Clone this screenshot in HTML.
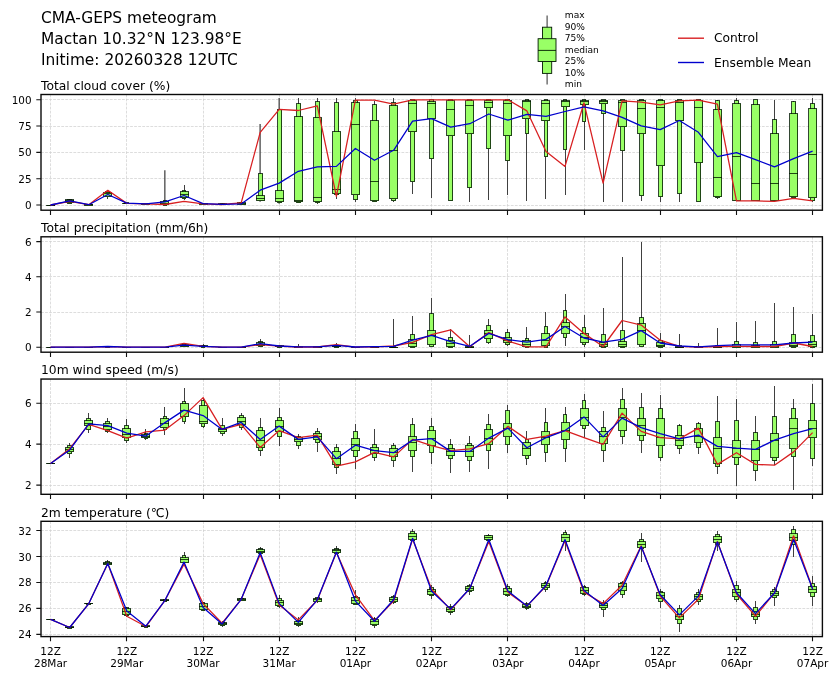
<!DOCTYPE html>
<html lang="en"><head><meta charset="utf-8"><title>CMA-GEPS meteogram</title>
<style>html,body{margin:0;padding:0;background:#fff}svg{display:block;will-change:transform}</style></head>
<body>
<svg width="840" height="680" viewBox="0 0 840 680" font-family="'DejaVu Sans','Liberation Sans',sans-serif" fill="#000">
<rect width="840" height="680" fill="#fff"/>
<g font-size="15.4px"><text x="41" y="22.9">CMA-GEPS meteogram</text><text x="41" y="44.1">Mactan 10.32°N 123.98°E</text><text x="41" y="65.2">Initime: 20260328 12UTC</text></g>
<line x1="547.1" y1="15.6" x2="547.1" y2="84.6" stroke="#404040" stroke-width="1.1"/>
<rect x="542.5" y="27.2" width="9.2" height="46.2" fill="#99ff66" stroke="#001800" stroke-width="0.9"/>
<rect x="538.1" y="38.7" width="17.9" height="22.8" fill="#99ff66" stroke="#001800" stroke-width="0.9"/>
<line x1="538.1" y1="50.4" x2="556" y2="50.4" stroke="#001800" stroke-width="0.9"/>
<g font-size="9.1px">
<text x="564.8" y="18.1">max</text>
<text x="564.8" y="29.6">90%</text>
<text x="564.8" y="41.1">75%</text>
<text x="564.8" y="52.6">median</text>
<text x="564.8" y="64.1">25%</text>
<text x="564.8" y="75.6">10%</text>
<text x="564.8" y="87.1">min</text>
</g>
<line x1="678" y1="38.2" x2="704" y2="38.2" stroke="#d82022" stroke-width="1.39"/>
<line x1="678" y1="62.5" x2="704" y2="62.5" stroke="#0000cd" stroke-width="1.39"/>
<g font-size="12.25px"><text x="714" y="42.4">Control</text><text x="714" y="66.8">Ensemble Mean</text></g>
<g id="panel0">
<text x="41" y="89.7" font-size="12.3px">Total cloud cover (%)</text>
<path d="M50.5 94.5V210.2M126.5 94.5V210.2M203.5 94.5V210.2M279.5 94.5V210.2M355.5 94.5V210.2M431.5 94.5V210.2M507.5 94.5V210.2M584.5 94.5V210.2M660.5 94.5V210.2M736.5 94.5V210.2M812.5 94.5V210.2M41.0 205.5H822.4M41.0 178.5H822.4M41.0 152.5H822.4M41.0 126.5H822.4M41.0 99.5H822.4" stroke="#cecece" stroke-width="0.7" stroke-dasharray="2.8 1.25" fill="none"/>
<clipPath id="cp0"><rect x="41.0" y="94.5" width="781.4" height="115.69999999999999"/></clipPath>
<g clip-path="url(#cp0)">
<path d="M50.5 205.0V205.0M69.5 198.7V203.9M88.5 204.5V205.0M107.5 190.3V198.7M126.5 202.9V203.9M145.5 203.4V204.5M184.5 185.0V199.7M203.5 202.9V204.5M222.5 203.4V205.0M241.5 202.4V205.0M298.5 97.9V203.4M317.5 97.9V204.4M336.5 97.9V198.7M355.5 97.9V202.0M374.5 101.2V202.0M393.5 97.9V202.4M412.5 99.8V194.2M431.5 99.8V198.3M450.5 99.8V201.3M469.5 99.8V202.4M488.5 99.8V199.7M507.5 99.8V195.2M526.5 99.8V200.9M545.5 99.8V198.9M565.5 99.8V194.8M584.5 99.8V149.9M603.5 99.8V201.7M622.5 99.8V201.7M641.5 99.8V200.9M660.5 99.8V201.7M679.5 99.8V201.7M698.5 99.8V201.7M717.5 99.8V199.3M736.5 97.9V201.3M755.5 99.8V201.3M774.5 99.8V201.3M793.5 100.8V199.3M812.5 97.9V201.7" stroke="#404040" stroke-width="1" fill="none" shape-rendering="crispEdges"/>
<path d="M164.85 170.3V205.0M260.10 124.1V201.7M279.15 97.9V203.8" stroke="#404040" stroke-width="1.25" fill="none"/>
<path d="M48.5 205.5H52.5V205.5H48.5zM67.5 199.5H71.5V203.5H67.5zM86.5 204.5H90.5V205.5H86.5zM105.5 191.5H109.5V196.5H105.5zM124.5 202.5H128.5V203.5H124.5zM144.5 203.5H147.5V204.5H144.5zM163.5 200.5H166.5V205.5H163.5zM182.5 190.5H185.5V198.5H182.5zM201.5 203.5H204.5V204.5H201.5zM220.5 203.5H224.5V204.5H220.5zM239.5 202.5H243.5V204.5H239.5zM258.5 173.5H262.5V200.5H258.5zM277.5 109.5H281.5V202.5H277.5zM296.5 103.5H300.5V202.5H296.5zM315.5 101.5H319.5V202.5H315.5zM334.5 102.5H338.5V194.5H334.5zM353.5 100.5H357.5V199.5H353.5zM372.5 104.5H376.5V201.5H372.5zM391.5 102.5H395.5V200.5H391.5zM410.5 99.5H414.5V181.5H410.5zM429.5 99.5H433.5V158.5H429.5zM448.5 99.5H452.5V200.5H448.5zM467.5 99.5H471.5V187.5H467.5zM486.5 99.5H490.5V148.5H486.5zM505.5 99.5H509.5V160.5H505.5zM525.5 99.5H528.5V133.5H525.5zM544.5 99.5H547.5V156.5H544.5zM563.5 99.5H566.5V149.5H563.5zM582.5 99.5H585.5V121.5H582.5zM601.5 99.5H605.5V113.5H601.5zM620.5 99.5H624.5V150.5H620.5zM639.5 99.5H643.5V195.5H639.5zM658.5 99.5H662.5V196.5H658.5zM677.5 99.5H681.5V193.5H677.5zM696.5 99.5H700.5V201.5H696.5zM715.5 100.5H719.5V197.5H715.5zM734.5 100.5H738.5V200.5H734.5zM753.5 99.5H757.5V200.5H753.5zM772.5 119.5H776.5V200.5H772.5zM791.5 101.5H795.5V197.5H791.5zM810.5 103.5H814.5V200.5H810.5z" stroke="#001800" stroke-width="1" stroke-opacity="0.8" fill="#99ff66" shape-rendering="crispEdges"/>
<path d="M46.5 205.5H54.5V205.5H46.5zM65.5 199.5H73.5V202.5H65.5zM84.5 204.5H92.5V205.5H84.5zM103.5 192.5H111.5V196.5H103.5zM122.5 203.5H130.5V203.5H122.5zM141.5 203.5H149.5V204.5H141.5zM160.5 201.5H168.5V204.5H160.5zM180.5 191.5H188.5V197.5H180.5zM199.5 203.5H207.5V204.5H199.5zM218.5 203.5H226.5V204.5H218.5zM237.5 202.5H245.5V204.5H237.5zM256.5 195.5H264.5V200.5H256.5zM275.5 190.5H283.5V201.5H275.5zM294.5 116.5H302.5V201.5H294.5zM313.5 117.5H321.5V201.5H313.5zM332.5 131.5H340.5V193.5H332.5zM351.5 102.5H359.5V194.5H351.5zM370.5 120.5H378.5V200.5H370.5zM389.5 105.5H397.5V198.5H389.5zM408.5 100.5H416.5V131.5H408.5zM427.5 101.5H435.5V118.5H427.5zM446.5 100.5H454.5V135.5H446.5zM465.5 100.5H473.5V133.5H465.5zM484.5 100.5H492.5V107.5H484.5zM503.5 100.5H511.5V135.5H503.5zM522.5 100.5H530.5V118.5H522.5zM541.5 100.5H549.5V120.5H541.5zM561.5 100.5H569.5V106.5H561.5zM580.5 100.5H588.5V104.5H580.5zM599.5 100.5H607.5V103.5H599.5zM618.5 100.5H626.5V126.5H618.5zM637.5 100.5H645.5V133.5H637.5zM656.5 100.5H664.5V165.5H656.5zM675.5 100.5H683.5V120.5H675.5zM694.5 100.5H702.5V162.5H694.5zM713.5 109.5H721.5V196.5H713.5zM732.5 103.5H740.5V200.5H732.5zM751.5 104.5H759.5V200.5H751.5zM770.5 133.5H778.5V200.5H770.5zM789.5 113.5H797.5V196.5H789.5zM808.5 108.5H816.5V197.5H808.5z" stroke="#001800" stroke-width="1" stroke-opacity="0.8" fill="#99ff66" shape-rendering="crispEdges"/>
<path d="M46.0 205.5H55.0M65.0 200.5H74.0M84.0 204.5H93.0M103.0 193.5H112.0M122.0 203.5H131.0M141.0 203.5H150.0M160.0 203.5H169.0M180.0 194.5H189.0M199.0 203.5H208.0M218.0 204.5H227.0M237.0 203.5H246.0M256.0 198.5H265.0M275.0 198.5H284.0M294.0 200.5H303.0M313.0 197.5H322.0M332.0 189.5H341.0M351.0 124.5H360.0M370.0 181.5H379.0M389.0 150.5H398.0M408.0 103.5H417.0M427.0 103.5H436.0M446.0 109.5H455.0M465.0 105.5H474.0M484.0 102.5H493.0M503.0 103.5H512.0M522.0 101.5H531.0M541.0 103.5H550.0M561.0 101.5H570.0M580.0 101.5H589.0M599.0 101.5H608.0M618.0 102.5H627.0M637.0 108.5H646.0M656.0 107.5H665.0M675.0 102.5H684.0M694.0 107.5H703.0M713.0 177.5H722.0M732.0 156.5H741.0M751.0 183.5H760.0M770.0 183.5H779.0M789.0 173.5H798.0M808.0 154.5H817.0" stroke="#001800" stroke-width="1" stroke-opacity="0.8" fill="none" shape-rendering="crispEdges"/>
<path d="M50.6 205.0L69.7 201.3L88.8 204.7L107.8 190.3L126.8 203.4L145.9 203.9L165.0 204.5L184.0 201.3L203.1 203.9L222.1 204.5L241.2 202.9L260.2 132.3L279.2 109.3L298.3 110.5L317.3 105.9L336.4 196.3L355.4 100.2L374.5 100.2L393.6 104.2L412.6 99.8L431.6 99.8L450.7 99.8L469.8 99.8L488.8 99.8L507.9 99.8L526.9 110.9L546.0 151.6L565.0 166.4L584.0 102.8L603.1 183.1L622.1 100.8L641.2 102.2L660.2 104.8L679.3 100.8L698.4 100.2L717.4 104.2L736.5 200.9L755.5 200.9L774.5 201.3L793.6 198.3L812.6 200.9" stroke="#d82022" stroke-width="1.28" fill="none" stroke-linejoin="round"/>
<path d="M50.6 205.0L69.7 200.8L88.8 204.7L107.8 194.5L126.8 203.1L145.9 203.9L165.0 201.8L184.0 195.5L203.1 203.7L222.1 204.4L241.2 203.9L260.2 190.2L279.2 183.1L298.3 171.3L317.3 166.8L336.4 166.4L355.4 148.5L374.5 160.3L393.6 150.3L412.6 121.1L431.6 118.7L450.7 127.2L469.8 123.7L488.8 114.0L507.9 120.1L526.9 114.4L546.0 116.4L565.0 111.5L584.0 106.9L603.1 110.9L622.1 117.4L641.2 125.8L660.2 129.6L679.3 120.5L698.4 132.3L717.4 156.6L736.5 152.6L755.5 159.7L774.5 166.8L793.6 158.7L812.6 151.2" stroke="#0000cd" stroke-width="1.28" fill="none" stroke-linejoin="round"/>
</g>
<rect x="41.0" y="94.5" width="781.4" height="115.69999999999999" fill="none" stroke="#0a0a0a" stroke-width="1.4"/>
<path d="M41.0 205.00h-4.7M41.0 178.69h-4.7M41.0 152.38h-4.7M41.0 126.07h-4.7M41.0 99.76h-4.7M50.5 210.2v4.7M126.5 210.2v4.7M203.5 210.2v4.7M279.5 210.2v4.7M355.5 210.2v4.7M431.5 210.2v4.7M507.5 210.2v4.7M584.5 210.2v4.7M660.5 210.2v4.7M736.5 210.2v4.7M812.5 210.2v4.7" stroke="#111" stroke-width="1.1" fill="none"/>
<g font-size="10.4px" text-anchor="end">
<text x="31.6" y="209.0">0</text>
<text x="31.6" y="182.7">25</text>
<text x="31.6" y="156.4">50</text>
<text x="31.6" y="130.1">75</text>
<text x="31.6" y="103.8">100</text>
</g>
</g>
<g id="panel1">
<text x="41" y="232.0" font-size="12.3px">Total precipitation (mm/6h)</text>
<path d="M50.5 236.8V352.2M126.5 236.8V352.2M203.5 236.8V352.2M279.5 236.8V352.2M355.5 236.8V352.2M431.5 236.8V352.2M507.5 236.8V352.2M584.5 236.8V352.2M660.5 236.8V352.2M736.5 236.8V352.2M812.5 236.8V352.2M41.0 347.5H822.4M41.0 312.5H822.4M41.0 276.5H822.4M41.0 241.5H822.4" stroke="#cecece" stroke-width="0.7" stroke-dasharray="2.8 1.25" fill="none"/>
<clipPath id="cp1"><rect x="41.0" y="236.8" width="781.4" height="115.39999999999998"/></clipPath>
<g clip-path="url(#cp1)">
<path d="M50.5 347.2V347.2M69.5 347.2V347.2M88.5 347.2V347.2M107.5 345.8V347.2M126.5 347.2V347.2M145.5 347.2V347.2M164.5 347.2V347.2M184.5 342.8V347.2M203.5 343.7V347.2M222.5 347.2V347.2M241.5 347.2V347.2M260.5 338.8V347.2M279.5 344.6V347.2M298.5 343.7V347.2M317.5 345.8V347.2M336.5 342.8V347.2M355.5 346.7V347.2M374.5 346.3V347.2M393.5 319.1V347.1M412.5 315.5V347.1M431.5 298.3V347.1M450.5 329.3V347.1M469.5 335.3V347.1M488.5 319.1V344.3M507.5 329.3V346.3M526.5 326.5V347.1M545.5 312.0V347.1M565.5 294.2V345.7M584.5 315.0V346.5M603.5 307.9V347.1M622.5 256.6V347.1M641.5 241.5V347.1M660.5 333.4V347.1M679.5 334.2V347.1M698.5 343.0V347.1M717.5 327.9V347.1M736.5 321.9V347.1M755.5 320.5V347.1M774.5 303.2V347.1M793.5 307.3V347.1M812.5 313.6V347.1" stroke="#404040" stroke-width="1" fill="none" shape-rendering="crispEdges"/>
<path d="M48.5 347.5H52.5V347.5H48.5zM67.5 347.5H71.5V347.5H67.5zM86.5 347.5H90.5V347.5H86.5zM105.5 346.5H109.5V347.5H105.5zM124.5 347.5H128.5V347.5H124.5zM144.5 347.5H147.5V347.5H144.5zM163.5 347.5H166.5V347.5H163.5zM182.5 343.5H185.5V346.5H182.5zM201.5 345.5H204.5V347.5H201.5zM220.5 347.5H224.5V347.5H220.5zM239.5 347.5H243.5V347.5H239.5zM258.5 341.5H262.5V346.5H258.5zM277.5 345.5H281.5V347.5H277.5zM296.5 346.5H300.5V347.5H296.5zM315.5 346.5H319.5V347.5H315.5zM334.5 345.5H338.5V347.5H334.5zM353.5 347.5H357.5V347.5H353.5zM372.5 346.5H376.5V347.5H372.5zM391.5 346.5H395.5V347.5H391.5zM410.5 334.5H414.5V347.5H410.5zM429.5 313.5H433.5V346.5H429.5zM448.5 337.5H452.5V347.5H448.5zM467.5 346.5H471.5V347.5H467.5zM486.5 325.5H490.5V342.5H486.5zM505.5 332.5H509.5V344.5H505.5zM525.5 338.5H528.5V347.5H525.5zM544.5 326.5H547.5V347.5H544.5zM563.5 310.5H566.5V337.5H563.5zM582.5 327.5H585.5V344.5H582.5zM601.5 334.5H605.5V347.5H601.5zM620.5 330.5H624.5V347.5H620.5zM639.5 317.5H643.5V346.5H639.5zM658.5 340.5H662.5V347.5H658.5zM677.5 345.5H681.5V347.5H677.5zM696.5 346.5H700.5V347.5H696.5zM715.5 345.5H719.5V347.5H715.5zM734.5 341.5H738.5V347.5H734.5zM753.5 342.5H757.5V347.5H753.5zM772.5 341.5H776.5V347.5H772.5zM791.5 334.5H795.5V347.5H791.5zM810.5 335.5H814.5V347.5H810.5z" stroke="#001800" stroke-width="1" stroke-opacity="0.8" fill="#99ff66" shape-rendering="crispEdges"/>
<path d="M46.5 347.5H54.5V347.5H46.5zM65.5 347.5H73.5V347.5H65.5zM84.5 347.5H92.5V347.5H84.5zM103.5 346.5H111.5V346.5H103.5zM122.5 347.5H130.5V347.5H122.5zM141.5 347.5H149.5V347.5H141.5zM160.5 347.5H168.5V347.5H160.5zM180.5 344.5H188.5V346.5H180.5zM199.5 345.5H207.5V346.5H199.5zM218.5 347.5H226.5V347.5H218.5zM237.5 347.5H245.5V347.5H237.5zM256.5 342.5H264.5V345.5H256.5zM275.5 345.5H283.5V346.5H275.5zM294.5 346.5H302.5V347.5H294.5zM313.5 346.5H321.5V347.5H313.5zM332.5 345.5H340.5V346.5H332.5zM351.5 347.5H359.5V347.5H351.5zM370.5 347.5H378.5V347.5H370.5zM389.5 347.5H397.5V347.5H389.5zM408.5 339.5H416.5V346.5H408.5zM427.5 330.5H435.5V344.5H427.5zM446.5 340.5H454.5V346.5H446.5zM465.5 346.5H473.5V347.5H465.5zM484.5 330.5H492.5V338.5H484.5zM503.5 337.5H511.5V342.5H503.5zM522.5 340.5H530.5V346.5H522.5zM541.5 333.5H549.5V345.5H541.5zM561.5 322.5H569.5V333.5H561.5zM580.5 333.5H588.5V342.5H580.5zM599.5 342.5H607.5V346.5H599.5zM618.5 341.5H626.5V346.5H618.5zM637.5 323.5H645.5V344.5H637.5zM656.5 342.5H664.5V346.5H656.5zM675.5 346.5H683.5V347.5H675.5zM694.5 347.5H702.5V347.5H694.5zM713.5 346.5H721.5V347.5H713.5zM732.5 344.5H740.5V347.5H732.5zM751.5 345.5H759.5V347.5H751.5zM770.5 344.5H778.5V347.5H770.5zM789.5 342.5H797.5V346.5H789.5zM808.5 341.5H816.5V346.5H808.5z" stroke="#001800" stroke-width="1" stroke-opacity="0.8" fill="#99ff66" shape-rendering="crispEdges"/>
<path d="M46.0 347.5H55.0M65.0 347.5H74.0M84.0 347.5H93.0M103.0 346.5H112.0M122.0 347.5H131.0M141.0 347.5H150.0M160.0 347.5H169.0M180.0 345.5H189.0M199.0 346.5H208.0M218.0 347.5H227.0M237.0 347.5H246.0M256.0 344.5H265.0M275.0 346.5H284.0M294.0 347.5H303.0M313.0 347.5H322.0M332.0 346.5H341.0M351.0 347.5H360.0M370.0 347.5H379.0M389.0 347.5H398.0M408.0 343.5H417.0M427.0 335.5H436.0M446.0 343.5H455.0M465.0 347.5H474.0M484.0 333.5H493.0M503.0 340.5H512.0M522.0 344.5H531.0M541.0 340.5H550.0M561.0 326.5H570.0M580.0 337.5H589.0M599.0 344.5H608.0M618.0 344.5H627.0M637.0 330.5H646.0M656.0 345.5H665.0M675.0 347.5H684.0M694.0 347.5H703.0M713.0 347.5H722.0M732.0 346.5H741.0M751.0 346.5H760.0M770.0 346.5H779.0M789.0 345.5H798.0M808.0 344.5H817.0" stroke="#001800" stroke-width="1" stroke-opacity="0.8" fill="none" shape-rendering="crispEdges"/>
<path d="M50.6 347.2L69.7 347.2L88.8 347.2L107.8 346.7L126.8 347.2L145.9 347.2L165.0 347.2L184.0 343.3L203.1 346.3L222.1 347.2L241.2 347.2L260.2 344.6L279.2 346.1L298.3 347.0L317.3 347.0L336.4 344.6L355.4 347.2L374.5 346.8L393.6 346.0L412.6 342.4L431.6 334.7L450.7 329.8L469.8 346.8L488.8 332.6L507.9 341.1L526.9 346.8L546.0 346.8L565.0 316.9L584.0 333.4L603.1 346.5L622.1 320.5L641.2 325.1L660.2 340.2L679.3 346.3L698.4 347.1L717.4 346.5L736.5 346.3L755.5 346.5L774.5 346.5L793.6 343.0L812.6 346.5" stroke="#d82022" stroke-width="1.28" fill="none" stroke-linejoin="round"/>
<path d="M50.6 347.2L69.7 347.2L88.8 347.2L107.8 346.5L126.8 347.2L145.9 347.2L165.0 347.2L184.0 345.1L203.1 346.3L222.1 347.2L241.2 347.2L260.2 343.7L279.2 346.0L298.3 346.8L317.3 346.8L336.4 345.4L355.4 347.0L374.5 346.7L393.6 346.3L412.6 340.2L431.6 335.3L450.7 341.6L469.8 346.3L488.8 333.4L507.9 339.7L526.9 342.2L546.0 339.4L565.0 326.5L584.0 338.0L603.1 342.2L622.1 339.4L641.2 330.6L660.2 343.0L679.3 346.0L698.4 346.8L717.4 345.7L736.5 344.9L755.5 344.9L774.5 344.9L793.6 343.0L812.6 342.2" stroke="#0000cd" stroke-width="1.28" fill="none" stroke-linejoin="round"/>
</g>
<rect x="41.0" y="236.8" width="781.4" height="115.39999999999998" fill="none" stroke="#0a0a0a" stroke-width="1.4"/>
<path d="M41.0 347.20h-4.7M41.0 312.00h-4.7M41.0 276.80h-4.7M41.0 241.60h-4.7M50.5 352.2v4.7M126.5 352.2v4.7M203.5 352.2v4.7M279.5 352.2v4.7M355.5 352.2v4.7M431.5 352.2v4.7M507.5 352.2v4.7M584.5 352.2v4.7M660.5 352.2v4.7M736.5 352.2v4.7M812.5 352.2v4.7" stroke="#111" stroke-width="1.1" fill="none"/>
<g font-size="10.4px" text-anchor="end">
<text x="31.6" y="351.2">0</text>
<text x="31.6" y="316.0">2</text>
<text x="31.6" y="280.8">4</text>
<text x="31.6" y="245.6">6</text>
</g>
</g>
<g id="panel2">
<text x="41" y="374.2" font-size="12.3px">10m wind speed (m/s)</text>
<path d="M50.5 379.05V494.3M126.5 379.05V494.3M203.5 379.05V494.3M279.5 379.05V494.3M355.5 379.05V494.3M431.5 379.05V494.3M507.5 379.05V494.3M584.5 379.05V494.3M660.5 379.05V494.3M736.5 379.05V494.3M812.5 379.05V494.3M41.0 485.5H822.4M41.0 444.5H822.4M41.0 403.5H822.4" stroke="#cecece" stroke-width="0.7" stroke-dasharray="2.8 1.25" fill="none"/>
<clipPath id="cp2"><rect x="41.0" y="379.05" width="781.4" height="115.25"/></clipPath>
<g clip-path="url(#cp2)">
<path d="M50.5 463.4V463.4M69.5 442.6V457.7M88.5 413.1V432.6M107.5 418.1V433.1M126.5 419.4V442.6M145.5 429.4V440.1M164.5 406.9V435.1M184.5 387.6V423.6M203.5 397.6V428.1M222.5 418.1V435.6M241.5 412.6V430.1M260.5 418.1V455.7M279.5 408.1V445.7M298.5 434.4V448.7M317.5 427.6V452.4M336.5 443.6V474.4M355.5 424.4V468.7M374.5 429.4V460.7M393.5 443.1V466.9M412.5 417.6V471.9M431.5 417.6V464.4M450.5 439.4V472.7M469.5 436.1V471.9M488.5 413.9V468.7M507.5 405.1V453.2M526.5 431.1V465.2M545.5 408.1V461.9M565.5 406.9V461.9M584.5 394.3V438.1M603.5 411.1V461.9M622.5 387.6V444.4M641.5 393.1V452.7M660.5 395.1V460.7M679.5 423.9V454.4M698.5 421.9V454.4M717.5 396.1V473.7M736.5 398.6V485.7M755.5 416.4V481.2M774.5 386.1V464.9M793.5 399.3V489.5M812.5 383.6V466.2" stroke="#404040" stroke-width="1" fill="none" shape-rendering="crispEdges"/>
<path d="M48.5 463.5H52.5V463.5H48.5zM67.5 445.5H71.5V453.5H67.5zM86.5 418.5H90.5V429.5H86.5zM105.5 421.5H109.5V431.5H105.5zM124.5 425.5H128.5V440.5H124.5zM144.5 433.5H147.5V438.5H144.5zM163.5 416.5H166.5V429.5H163.5zM182.5 401.5H185.5V421.5H182.5zM201.5 400.5H204.5V426.5H201.5zM220.5 425.5H224.5V433.5H220.5zM239.5 415.5H243.5V427.5H239.5zM258.5 427.5H262.5V450.5H258.5zM277.5 417.5H281.5V436.5H277.5zM296.5 436.5H300.5V445.5H296.5zM315.5 431.5H319.5V442.5H315.5zM334.5 447.5H338.5V467.5H334.5zM353.5 431.5H357.5V456.5H353.5zM372.5 444.5H376.5V457.5H372.5zM391.5 445.5H395.5V460.5H391.5zM410.5 424.5H414.5V456.5H410.5zM429.5 426.5H433.5V452.5H429.5zM448.5 444.5H452.5V458.5H448.5zM467.5 443.5H471.5V460.5H467.5zM486.5 424.5H490.5V450.5H486.5zM505.5 410.5H509.5V444.5H505.5zM525.5 439.5H528.5V458.5H525.5zM544.5 422.5H547.5V452.5H544.5zM563.5 414.5H566.5V448.5H563.5zM582.5 400.5H585.5V428.5H582.5zM601.5 427.5H605.5V450.5H601.5zM620.5 399.5H624.5V436.5H620.5zM639.5 407.5H643.5V440.5H639.5zM658.5 408.5H662.5V457.5H658.5zM677.5 425.5H681.5V448.5H677.5zM696.5 423.5H700.5V447.5H696.5zM715.5 421.5H719.5V466.5H715.5zM734.5 420.5H738.5V464.5H734.5zM753.5 432.5H757.5V470.5H753.5zM772.5 416.5H776.5V460.5H772.5zM791.5 408.5H795.5V456.5H791.5zM810.5 403.5H814.5V458.5H810.5z" stroke="#001800" stroke-width="1" stroke-opacity="0.8" fill="#99ff66" shape-rendering="crispEdges"/>
<path d="M46.5 463.5H54.5V463.5H46.5zM65.5 447.5H73.5V451.5H65.5zM84.5 420.5H92.5V425.5H84.5zM103.5 423.5H111.5V429.5H103.5zM122.5 428.5H130.5V437.5H122.5zM141.5 434.5H149.5V437.5H141.5zM160.5 418.5H168.5V427.5H160.5zM180.5 403.5H188.5V416.5H180.5zM199.5 405.5H207.5V423.5H199.5zM218.5 428.5H226.5V431.5H218.5zM237.5 417.5H245.5V424.5H237.5zM256.5 430.5H264.5V447.5H256.5zM275.5 420.5H283.5V431.5H275.5zM294.5 437.5H302.5V441.5H294.5zM313.5 433.5H321.5V439.5H313.5zM332.5 451.5H340.5V464.5H332.5zM351.5 438.5H359.5V450.5H351.5zM370.5 447.5H378.5V453.5H370.5zM389.5 448.5H397.5V456.5H389.5zM408.5 436.5H416.5V450.5H408.5zM427.5 430.5H435.5V445.5H427.5zM446.5 448.5H454.5V455.5H446.5zM465.5 445.5H473.5V456.5H465.5zM484.5 429.5H492.5V444.5H484.5zM503.5 423.5H511.5V436.5H503.5zM522.5 442.5H530.5V455.5H522.5zM541.5 431.5H549.5V444.5H541.5zM561.5 422.5H569.5V439.5H561.5zM580.5 408.5H588.5V425.5H580.5zM599.5 431.5H607.5V443.5H599.5zM618.5 408.5H626.5V430.5H618.5zM637.5 418.5H645.5V435.5H637.5zM656.5 418.5H664.5V445.5H656.5zM675.5 435.5H683.5V445.5H675.5zM694.5 428.5H702.5V442.5H694.5zM713.5 437.5H721.5V463.5H713.5zM732.5 440.5H740.5V457.5H732.5zM751.5 440.5H759.5V460.5H751.5zM770.5 433.5H778.5V457.5H770.5zM789.5 418.5H797.5V448.5H789.5zM808.5 420.5H816.5V437.5H808.5z" stroke="#001800" stroke-width="1" stroke-opacity="0.8" fill="#99ff66" shape-rendering="crispEdges"/>
<path d="M46.0 463.5H55.0M65.0 449.5H74.0M84.0 423.5H93.0M103.0 426.5H112.0M122.0 434.5H131.0M141.0 436.5H150.0M160.0 423.5H169.0M180.0 410.5H189.0M199.0 421.5H208.0M218.0 429.5H227.0M237.0 421.5H246.0M256.0 440.5H265.0M275.0 426.5H284.0M294.0 439.5H303.0M313.0 436.5H322.0M332.0 458.5H341.0M351.0 444.5H360.0M370.0 450.5H379.0M389.0 452.5H398.0M408.0 442.5H417.0M427.0 438.5H436.0M446.0 451.5H455.0M465.0 451.5H474.0M484.0 438.5H493.0M503.0 428.5H512.0M522.0 448.5H531.0M541.0 437.5H550.0M561.0 430.5H570.0M580.0 417.5H589.0M599.0 436.5H608.0M618.0 417.5H627.0M637.0 425.5H646.0M656.0 437.5H665.0M675.0 440.5H684.0M694.0 436.5H703.0M713.0 448.5H722.0M732.0 448.5H741.0M751.0 449.5H760.0M770.0 440.5H779.0M789.0 428.5H798.0M808.0 428.5H817.0" stroke="#001800" stroke-width="1" stroke-opacity="0.8" fill="none" shape-rendering="crispEdges"/>
<path d="M50.6 463.4L69.7 448.7L88.8 424.4L107.8 430.6L126.8 438.1L145.9 431.9L165.0 430.1L184.0 415.6L203.1 397.6L222.1 429.4L241.2 424.4L260.2 447.4L279.2 430.6L298.3 437.6L317.3 435.1L336.4 466.2L355.4 461.9L374.5 452.4L393.6 456.9L412.6 439.4L431.6 445.7L450.7 450.7L469.8 448.9L488.8 443.6L507.9 426.4L526.9 439.4L546.0 436.1L565.0 430.6L584.0 437.6L603.1 444.4L622.1 413.1L641.2 431.4L660.2 437.6L679.3 438.9L698.4 428.1L717.4 464.4L736.5 452.7L755.5 464.4L774.5 465.2L793.6 451.9L812.6 432.6" stroke="#d82022" stroke-width="1.28" fill="none" stroke-linejoin="round"/>
<path d="M50.6 463.4L69.7 449.9L88.8 423.9L107.8 425.6L126.8 433.1L145.9 436.1L165.0 422.6L184.0 410.1L203.1 415.6L222.1 429.4L241.2 422.4L260.2 439.4L279.2 426.1L298.3 439.4L317.3 436.9L336.4 458.7L355.4 445.2L374.5 450.7L393.6 452.7L412.6 440.1L431.6 438.6L450.7 451.4L469.8 451.4L488.8 438.1L507.9 428.1L526.9 447.7L546.0 437.6L565.0 430.6L584.0 416.9L603.1 436.9L622.1 418.1L641.2 427.6L660.2 433.6L679.3 438.9L698.4 435.1L717.4 446.4L736.5 448.2L755.5 449.4L774.5 440.1L793.6 433.6L812.6 428.6" stroke="#0000cd" stroke-width="1.28" fill="none" stroke-linejoin="round"/>
</g>
<rect x="41.0" y="379.05" width="781.4" height="115.25" fill="none" stroke="#0a0a0a" stroke-width="1.4"/>
<path d="M41.0 485.10h-4.7M41.0 444.15h-4.7M41.0 403.20h-4.7M50.5 494.3v4.7M126.5 494.3v4.7M203.5 494.3v4.7M279.5 494.3v4.7M355.5 494.3v4.7M431.5 494.3v4.7M507.5 494.3v4.7M584.5 494.3v4.7M660.5 494.3v4.7M736.5 494.3v4.7M812.5 494.3v4.7" stroke="#111" stroke-width="1.1" fill="none"/>
<g font-size="10.4px" text-anchor="end">
<text x="31.6" y="489.1">2</text>
<text x="31.6" y="448.1">4</text>
<text x="31.6" y="407.2">6</text>
</g>
</g>
<g id="panel3">
<text x="41" y="516.9" font-size="12.3px">2m temperature (℃)</text>
<path d="M50.5 521.3V636.6M126.5 521.3V636.6M203.5 521.3V636.6M279.5 521.3V636.6M355.5 521.3V636.6M431.5 521.3V636.6M507.5 521.3V636.6M584.5 521.3V636.6M660.5 521.3V636.6M736.5 521.3V636.6M812.5 521.3V636.6M41.0 634.5H822.4M41.0 608.5H822.4M41.0 582.5H822.4M41.0 556.5H822.4M41.0 530.5H822.4" stroke="#cecece" stroke-width="0.7" stroke-dasharray="2.8 1.25" fill="none"/>
<clipPath id="cp3"><rect x="41.0" y="521.3" width="781.4" height="115.30000000000007"/></clipPath>
<g clip-path="url(#cp3)">
<path d="M50.5 619.4V619.4M69.5 626.2V628.7M88.5 602.8V604.3M107.5 560.1V565.4M126.5 607.4V617.4M145.5 624.5V628.0M164.5 598.8V601.8M184.5 552.1V563.6M203.5 601.8V611.4M222.5 621.2V626.7M241.5 597.3V601.3M260.5 546.6V555.1M279.5 594.8V607.9M298.5 617.4V626.5M317.5 596.8V602.8M336.5 545.8V554.1M355.5 589.8V605.4M374.5 617.4V627.5M393.5 594.8V603.8M412.5 529.0V541.0M431.5 585.3V598.6M450.5 603.6V615.4M469.5 584.2V594.8M488.5 534.0V541.5M507.5 583.5V597.3M526.5 602.3V609.9M545.5 581.0V592.3M565.5 530.0V550.8M584.5 585.3V596.1M603.5 599.8V616.7M622.5 581.0V597.6M641.5 533.2V561.6M660.5 588.5V607.9M679.5 604.9V631.7M698.5 589.0V604.9M717.5 530.7V550.8M736.5 581.0V601.8M755.5 601.1V623.7M774.5 587.3V606.1M793.5 525.7V557.1M812.5 576.0V606.1" stroke="#404040" stroke-width="1" fill="none" shape-rendering="crispEdges"/>
<path d="M48.5 619.5H52.5V619.5H48.5zM67.5 626.5H71.5V628.5H67.5zM86.5 603.5H90.5V604.5H86.5zM105.5 561.5H109.5V564.5H105.5zM124.5 607.5H128.5V615.5H124.5zM144.5 625.5H147.5V627.5H144.5zM163.5 599.5H166.5V601.5H163.5zM182.5 555.5H185.5V562.5H182.5zM201.5 602.5H204.5V610.5H201.5zM220.5 622.5H224.5V625.5H220.5zM239.5 598.5H243.5V600.5H239.5zM258.5 548.5H262.5V553.5H258.5zM277.5 598.5H281.5V606.5H277.5zM296.5 620.5H300.5V625.5H296.5zM315.5 597.5H319.5V601.5H315.5zM334.5 548.5H338.5V553.5H334.5zM353.5 596.5H357.5V604.5H353.5zM372.5 618.5H376.5V625.5H372.5zM391.5 596.5H395.5V602.5H391.5zM410.5 531.5H414.5V540.5H410.5zM429.5 587.5H433.5V595.5H429.5zM448.5 606.5H452.5V612.5H448.5zM467.5 585.5H471.5V591.5H467.5zM486.5 535.5H490.5V540.5H486.5zM505.5 586.5H509.5V595.5H505.5zM525.5 603.5H528.5V608.5H525.5zM544.5 582.5H547.5V589.5H544.5zM563.5 532.5H566.5V542.5H563.5zM582.5 586.5H585.5V594.5H582.5zM601.5 602.5H605.5V609.5H601.5zM620.5 582.5H624.5V594.5H620.5zM639.5 539.5H643.5V548.5H639.5zM658.5 591.5H662.5V601.5H658.5zM677.5 608.5H681.5V623.5H677.5zM696.5 592.5H700.5V601.5H696.5zM715.5 534.5H719.5V544.5H715.5zM734.5 585.5H738.5V599.5H734.5zM753.5 607.5H757.5V619.5H753.5zM772.5 589.5H776.5V597.5H772.5zM791.5 529.5H795.5V544.5H791.5zM810.5 583.5H814.5V596.5H810.5z" stroke="#001800" stroke-width="1" stroke-opacity="0.8" fill="#99ff66" shape-rendering="crispEdges"/>
<path d="M46.5 619.5H54.5V619.5H46.5zM65.5 626.5H73.5V627.5H65.5zM84.5 603.5H92.5V603.5H84.5zM103.5 562.5H111.5V564.5H103.5zM122.5 608.5H130.5V614.5H122.5zM141.5 625.5H149.5V626.5H141.5zM160.5 599.5H168.5V600.5H160.5zM180.5 557.5H188.5V562.5H180.5zM199.5 603.5H207.5V609.5H199.5zM218.5 622.5H226.5V624.5H218.5zM237.5 598.5H245.5V600.5H237.5zM256.5 549.5H264.5V552.5H256.5zM275.5 600.5H283.5V605.5H275.5zM294.5 621.5H302.5V624.5H294.5zM313.5 598.5H321.5V601.5H313.5zM332.5 549.5H340.5V552.5H332.5zM351.5 597.5H359.5V603.5H351.5zM370.5 619.5H378.5V624.5H370.5zM389.5 597.5H397.5V601.5H389.5zM408.5 533.5H416.5V539.5H408.5zM427.5 589.5H435.5V594.5H427.5zM446.5 607.5H454.5V611.5H446.5zM465.5 586.5H473.5V590.5H465.5zM484.5 535.5H492.5V539.5H484.5zM503.5 588.5H511.5V594.5H503.5zM522.5 604.5H530.5V607.5H522.5zM541.5 583.5H549.5V587.5H541.5zM561.5 534.5H569.5V541.5H561.5zM580.5 587.5H588.5V593.5H580.5zM599.5 603.5H607.5V607.5H599.5zM618.5 583.5H626.5V590.5H618.5zM637.5 541.5H645.5V547.5H637.5zM656.5 592.5H664.5V598.5H656.5zM675.5 614.5H683.5V619.5H675.5zM694.5 594.5H702.5V599.5H694.5zM713.5 536.5H721.5V542.5H713.5zM732.5 589.5H740.5V596.5H732.5zM751.5 611.5H759.5V616.5H751.5zM770.5 591.5H778.5V595.5H770.5zM789.5 533.5H797.5V540.5H789.5zM808.5 586.5H816.5V592.5H808.5z" stroke="#001800" stroke-width="1" stroke-opacity="0.8" fill="#99ff66" shape-rendering="crispEdges"/>
<path d="M46.0 619.5H55.0M65.0 627.5H74.0M84.0 603.5H93.0M103.0 563.5H112.0M122.0 611.5H131.0M141.0 626.5H150.0M160.0 600.5H169.0M180.0 559.5H189.0M199.0 606.5H208.0M218.0 623.5H227.0M237.0 599.5H246.0M256.0 551.5H265.0M275.0 602.5H284.0M294.0 623.5H303.0M313.0 599.5H322.0M332.0 550.5H341.0M351.0 600.5H360.0M370.0 621.5H379.0M389.0 599.5H398.0M408.0 536.5H417.0M427.0 591.5H436.0M446.0 609.5H455.0M465.0 588.5H474.0M484.0 537.5H493.0M503.0 591.5H512.0M522.0 606.5H531.0M541.0 585.5H550.0M561.0 537.5H570.0M580.0 590.5H589.0M599.0 605.5H608.0M618.0 586.5H627.0M637.0 544.5H646.0M656.0 595.5H665.0M675.0 616.5H684.0M694.0 596.5H703.0M713.0 539.5H722.0M732.0 592.5H741.0M751.0 614.5H760.0M770.0 593.5H779.0M789.0 537.5H798.0M808.0 589.5H817.0" stroke="#001800" stroke-width="1" stroke-opacity="0.8" fill="none" shape-rendering="crispEdges"/>
<path d="M50.6 619.4L69.7 627.5L88.8 603.6L107.8 563.6L126.8 616.2L145.9 626.5L165.0 600.3L184.0 564.1L203.1 603.6L222.1 623.2L241.2 599.3L260.2 554.6L279.2 604.9L298.3 619.9L317.3 600.3L336.4 552.6L355.4 594.8L374.5 620.7L393.6 601.1L412.6 539.0L431.6 589.3L450.7 609.9L469.8 588.5L488.8 541.5L507.9 592.3L526.9 606.1L546.0 586.0L565.0 540.8L584.0 592.3L603.1 603.6L622.1 585.3L641.2 545.8L660.2 596.1L679.3 617.9L698.4 599.3L717.4 541.5L736.5 594.0L755.5 616.2L774.5 592.8L793.6 535.8L812.6 588.5" stroke="#d82022" stroke-width="1.28" fill="none" stroke-linejoin="round"/>
<path d="M50.6 619.4L69.7 627.5L88.8 603.6L107.8 563.4L126.8 611.1L145.9 626.2L165.0 600.3L184.0 562.1L203.1 607.4L222.1 623.9L241.2 599.3L260.2 552.6L279.2 603.6L298.3 622.4L317.3 599.8L336.4 552.1L355.4 601.1L374.5 621.2L393.6 599.8L412.6 538.3L431.6 591.3L450.7 609.1L469.8 588.5L488.8 539.5L507.9 591.0L526.9 606.1L546.0 585.5L565.0 539.5L584.0 590.5L603.1 605.4L622.1 588.5L641.2 546.6L660.2 594.8L679.3 614.9L698.4 596.1L717.4 542.0L736.5 592.8L755.5 613.6L774.5 593.0L793.6 539.5L812.6 589.0" stroke="#0000cd" stroke-width="1.28" fill="none" stroke-linejoin="round"/>
</g>
<rect x="41.0" y="521.3" width="781.4" height="115.30000000000007" fill="none" stroke="#0a0a0a" stroke-width="1.4"/>
<path d="M41.0 634.40h-4.7M41.0 608.42h-4.7M41.0 582.44h-4.7M41.0 556.46h-4.7M41.0 530.48h-4.7M50.5 636.6v4.7M126.5 636.6v4.7M203.5 636.6v4.7M279.5 636.6v4.7M355.5 636.6v4.7M431.5 636.6v4.7M507.5 636.6v4.7M584.5 636.6v4.7M660.5 636.6v4.7M736.5 636.6v4.7M812.5 636.6v4.7" stroke="#111" stroke-width="1.1" fill="none"/>
<g font-size="10.4px" text-anchor="end">
<text x="31.6" y="638.4">24</text>
<text x="31.6" y="612.4">26</text>
<text x="31.6" y="586.4">28</text>
<text x="31.6" y="560.5">30</text>
<text x="31.6" y="534.5">32</text>
</g>
<g font-size="10.5px" text-anchor="middle">
<text x="50.6" y="654.6">12Z</text><text x="50.6" y="666.7">28Mar</text>
<text x="126.8" y="654.6">12Z</text><text x="126.8" y="666.7">29Mar</text>
<text x="203.1" y="654.6">12Z</text><text x="203.1" y="666.7">30Mar</text>
<text x="279.2" y="654.6">12Z</text><text x="279.2" y="666.7">31Mar</text>
<text x="355.4" y="654.6">12Z</text><text x="355.4" y="666.7">01Apr</text>
<text x="431.6" y="654.6">12Z</text><text x="431.6" y="666.7">02Apr</text>
<text x="507.9" y="654.6">12Z</text><text x="507.9" y="666.7">03Apr</text>
<text x="584.0" y="654.6">12Z</text><text x="584.0" y="666.7">04Apr</text>
<text x="660.2" y="654.6">12Z</text><text x="660.2" y="666.7">05Apr</text>
<text x="736.5" y="654.6">12Z</text><text x="736.5" y="666.7">06Apr</text>
<text x="812.6" y="654.6">12Z</text><text x="812.6" y="666.7">07Apr</text>
</g>
</g>
</svg>
</body></html>
